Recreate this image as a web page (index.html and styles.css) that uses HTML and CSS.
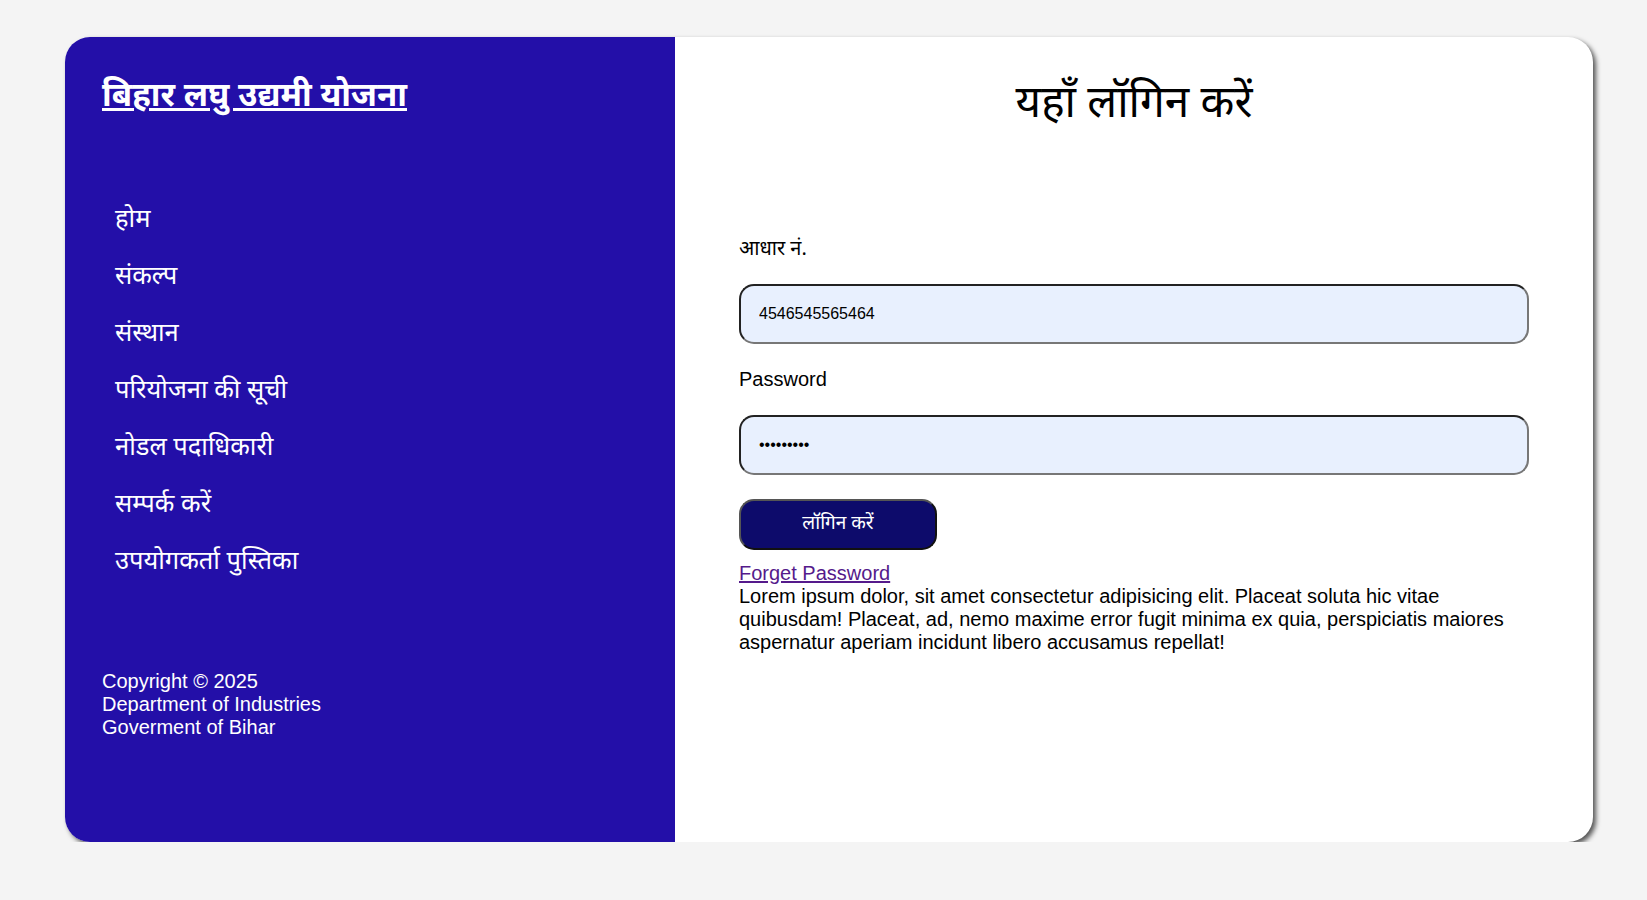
FILE: index.html
```html
<!DOCTYPE html>
<html lang="hi">
<head>
<meta charset="utf-8">
<title>बिहार लघु उद्यमी योजना</title>
<link rel="stylesheet" href="styles.css">
</head>
<body>
<div class="card">
  <aside class="sidebar">
    <a class="brand" href="#">बिहार लघु उद्यमी योजना</a>
    <ul class="nav">
      <li><a href="#">होम</a></li>
      <li><a href="#">संकल्प</a></li>
      <li><a href="#">संस्थान</a></li>
      <li><a href="#">परियोजना की सूची</a></li>
      <li><a href="#">नोडल पदाधिकारी</a></li>
      <li><a href="#">सम्पर्क करें</a></li>
      <li><a href="#">उपयोगकर्ता पुस्तिका</a></li>
    </ul>
    <div class="copy">
      Copyright © 2025<br>
      Department of Industries<br>
      Goverment of Bihar
    </div>
  </aside>
  <main class="main">
    <h1 class="title">यहाँ लॉगिन करें</h1>
    <form class="form">
      <label class="label label-hi" for="aadhar">आधार नं.</label>
      <input class="field field-first" id="aadhar" type="text" value="4546545565464">
      <label class="label" for="pwd">Password</label>
      <input class="field" id="pwd" type="password" value="123456789">
      <button class="btn" type="button">लॉगिन करें</button>
    </form>
    <a class="forget" href="#">Forget Password</a>
    <p class="lorem">Lorem ipsum dolor, sit amet consectetur adipisicing elit. Placeat soluta hic vitae quibusdam! Placeat, ad, nemo maxime error fugit minima ex quia, perspiciatis maiores aspernatur aperiam incidunt libero accusamus repellat!</p>
  </main>
</div>
</body>
</html>
```
FILE: styles.css
```css
* { box-sizing: border-box; }
html, body { margin: 0; padding: 0; }
body {
  background: #f4f4f4;
  font-family: "Liberation Sans", Arial, "Noto Sans", sans-serif;
  color: #000;
}
.card {
  margin: 37px 54px 0 65px;
  height: 805px;
  display: flex;
  background: #fff;
  border-radius: 25px;
  overflow: hidden;
  box-shadow: 3px 3px 5px rgba(0,0,0,0.65);
}
.sidebar {
  width: 610px;
  flex: none;
  background: #230fa8;
  color: #fff;
  padding: 41px 0 0 37px;
  display: flex;
  flex-direction: column;
}
.brand {
  color: #fff;
  font-size: 33px;
  font-weight: bold;
  text-decoration: underline;
  font-family: "Nirmala UI", "Noto Sans Devanagari", "Noto Sans", sans-serif;
  align-self: flex-start;
  line-height: 40px;
}
.nav {
  list-style: none;
  margin: 88px 0 0 0;
  padding: 0 0 0 13px;
}
.nav li {
  height: 57px;
}
.nav a {
  color: #fff;
  text-decoration: none;
  font-size: 25.5px;
  line-height: 30px;
  font-family: "Nirmala UI", "Noto Sans Devanagari", "Noto Sans", sans-serif;
}
.copy {
  margin-top: 65px;
  font-size: 20px;
  line-height: 23px;
}
.main {
  flex: 1;
  padding: 0 64px;
}
.title {
  margin: 42px 0 0 0;
  text-align: center;
  font-size: 44px;
  font-weight: normal;
  line-height: 56px;
  font-family: "Nirmala UI", "Noto Sans Devanagari", "Noto Sans", sans-serif;
}
.form {
  margin-top: 103px;
  display: flex;
  flex-direction: column;
  align-items: flex-start;
}
.label {
  font-size: 20px;
  line-height: 24px;
}
.label-hi {
  font-family: "Nirmala UI", "Noto Sans Devanagari", "Noto Sans", sans-serif;
}
.field {
  width: 100%;
  height: 60px;
  border: 2px solid #222;
  border-bottom-color: #777;
  border-right-color: #777;
  border-radius: 15px;
  background: #e8f0fe;
  padding: 0 18px;
  font-family: "Liberation Sans", Arial, sans-serif;
  font-size: 16px;
  margin: 24px 0 23px 0;
  color: #000;
}
.field-first {
  margin-top: 22px;
}
.btn {
  margin-top: 1px;
  width: 198px;
  height: 51px;
  background: #0d0b6b;
  color: #fff;
  border: 2px solid #555;
  border-bottom-color: #111;
  border-right-color: #111;
  border-radius: 15px;
  font-size: 19px;
  font-family: "Nirmala UI", "Noto Sans Devanagari", "Noto Sans", sans-serif;
}
.forget {
  display: inline-block;
  margin-top: 12px;
  color: #551a8b;
  font-size: 20px;
  line-height: 23px;
}
.lorem {
  margin: 0;
  font-size: 20px;
  line-height: 23px;
}
```
